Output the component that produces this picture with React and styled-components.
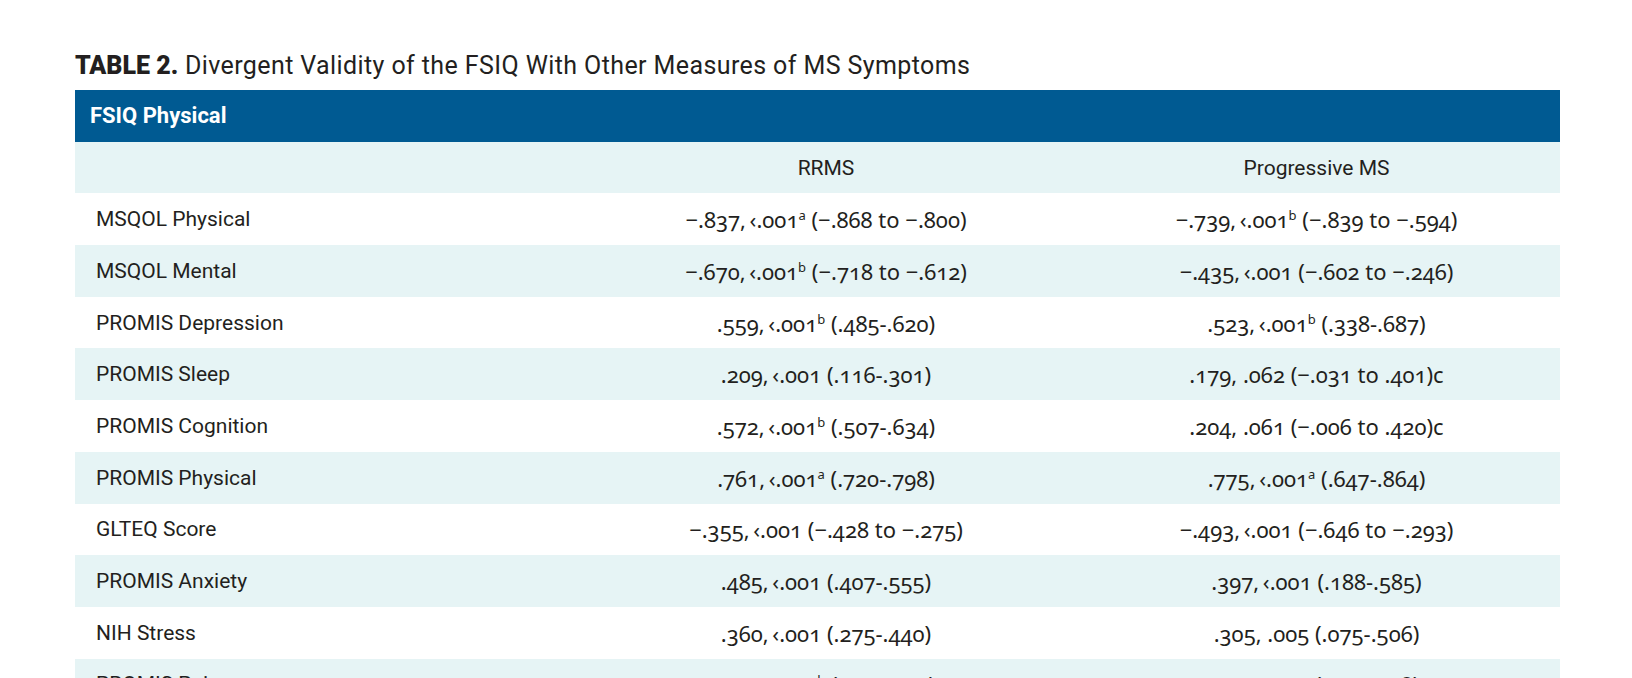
import React from "react";
import styled, { createGlobalStyle } from "styled-components";

const Global = createGlobalStyle`
  html, body { margin: 0; padding: 0; background: #ffffff; }
  body { font-family: Roboto, "Liberation Sans", sans-serif; color: #231f20; }
`;

const Page = styled.div`
  padding: 52px 72px 0 75px;
`;

const Title = styled.h2`
  margin: 0 0 10px 0;
  font-family: Roboto, "Liberation Sans", sans-serif;
  font-size: 25px;
  line-height: 28px;
  font-weight: 400;
  letter-spacing: 0.4px;
  color: #231f20;
`;

const TitleLabel = styled.span`
  font-weight: 900;
  letter-spacing: 0;
`;

const Table = styled.div`
  display: grid;
  grid-template-columns: 504px 494px 1fr;
  width: 1485px;
`;

const HeaderBand = styled.div`
  grid-column: 1 / -1;
  height: 51.7px;
  background: #005a92;
  color: #ffffff;
  display: flex;
  align-items: center;
  padding-left: 15px;
  font-size: 22px;
  font-weight: 700;
`;

const Row = styled.div`
  display: contents;
`;

const Cell = styled.div`
  height: 51.7px;
  display: flex;
  align-items: center;
  background: ${(p) => (p.$shaded ? "#e6f4f5" : "#ffffff")};
  justify-content: ${(p) => (p.$center ? "center" : "flex-start")};
  padding-left: ${(p) => (p.$center ? "0" : "21px")};
  font-size: 21px;
  white-space: nowrap;
`;

const Value = styled.span`
  font-family: "Noto Sans", sans-serif;
  font-feature-settings: "onum" 1, "lnum" 0;
  font-variant-numeric: oldstyle-nums;
  font-size: 22px;
  color: #231f20;
`;

const Sup = styled.sup`
  font-size: 13px;
  vertical-align: 8px;
  line-height: 0;
`;

const T = "\u2009";

const rows = [
  ["MSQOL Physical", [`−.837,${T}‹.001`, "a", " (−.868 to −.800)"], [`−.739,${T}‹.001`, "b", " (−.839 to −.594)"]],
  ["MSQOL Mental", [`−.670,${T}‹.001`, "b", " (−.718 to −.612)"], [`−.435,${T}‹.001 (−.602 to −.246)`]],
  ["PROMIS Depression", [`.559,${T}‹.001`, "b", " (.485-.620)"], [`.523,${T}‹.001`, "b", " (.338-.687)"]],
  ["PROMIS Sleep", [`.209,${T}‹.001 (.116-.301)`], [".179, .062 (−.031 to .401)c"]],
  ["PROMIS Cognition", [`.572,${T}‹.001`, "b", " (.507-.634)"], [".204, .061 (−.006 to .420)c"]],
  ["PROMIS Physical", [`.761,${T}‹.001`, "a", " (.720-.798)"], [`.775,${T}‹.001`, "a", " (.647-.864)"]],
  ["GLTEQ Score", [`−.355,${T}‹.001 (−.428 to −.275)`], [`−.493,${T}‹.001 (−.646 to −.293)`]],
  ["PROMIS Anxiety", [`.485,${T}‹.001 (.407-.555)`], [`.397,${T}‹.001 (.188-.585)`]],
  ["NIH Stress", [`.360,${T}‹.001 (.275-.440)`], [".305, .005 (.075-.506)"]],
  ["PROMIS Pain", [`.413,${T}‹.001`, "b", " (.330-.490)"], [".357, .001 (.145-.538)"]],
];

function Val({ parts }) {
  const [a, sup, b] = parts;
  return (
    <Value>
      {a}
      {sup ? <Sup>{sup}</Sup> : null}
      {b}
    </Value>
  );
}

export default function App() {
  return (
    <>
      <Global />
      <Page>
        <Title>
          <TitleLabel>TABLE 2.</TitleLabel> Divergent Validity of the FSIQ With Other Measures of MS Symptoms
        </Title>
        <Table>
          <HeaderBand>FSIQ Physical</HeaderBand>
          <Row>
            <Cell $shaded />
            <Cell $shaded $center>RRMS</Cell>
            <Cell $shaded $center>Progressive MS</Cell>
          </Row>
          {rows.map(([label, r, p], i) => {
            const shaded = i % 2 === 1;
            return (
              <Row key={label}>
                <Cell $shaded={shaded}>{label}</Cell>
                <Cell $shaded={shaded} $center><Val parts={r} /></Cell>
                <Cell $shaded={shaded} $center><Val parts={p} /></Cell>
              </Row>
            );
          })}
        </Table>
      </Page>
    </>
  );
}
